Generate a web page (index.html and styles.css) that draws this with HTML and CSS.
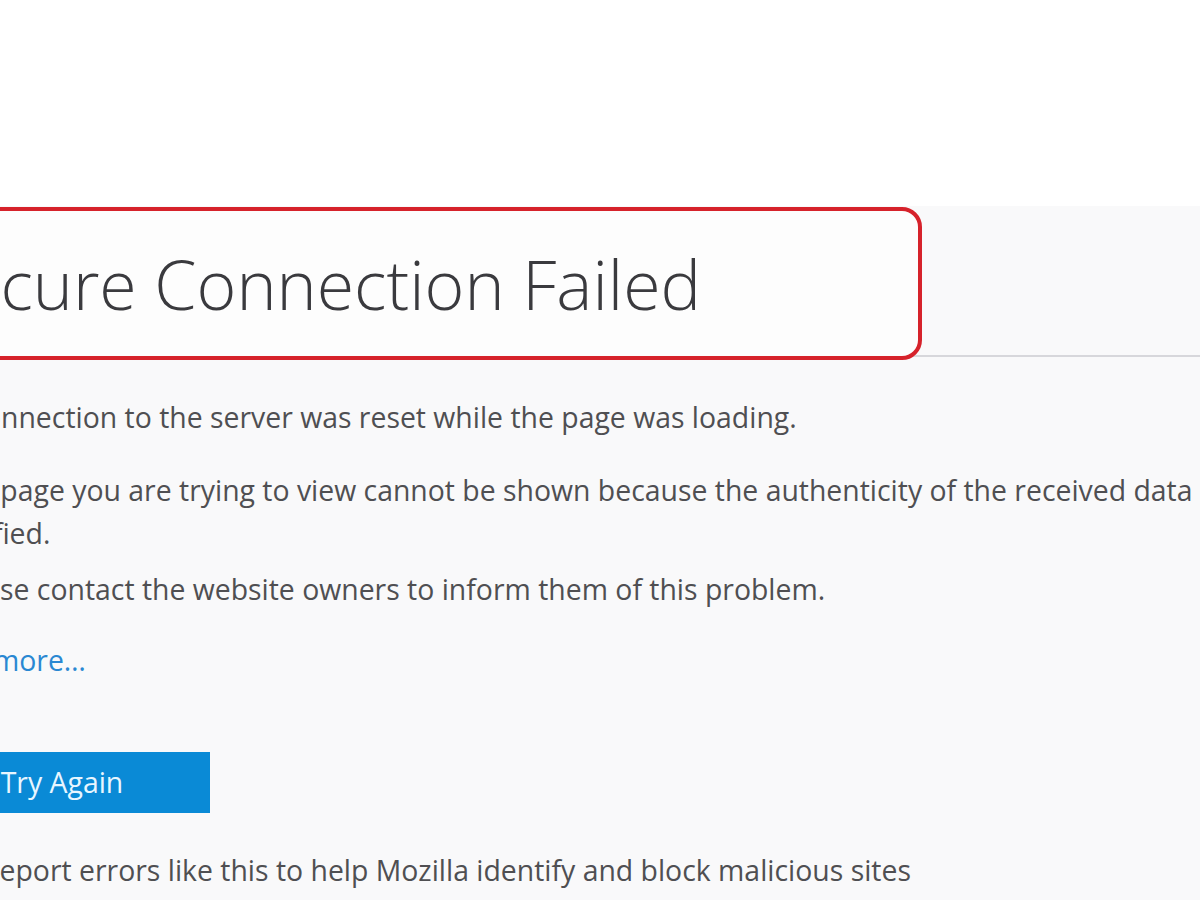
FILE: index.html
```html
<!DOCTYPE html>
<html lang="en">
<head>
	<meta charset="UTF-8">
	<title>Secure Connection Failed</title>
	<link rel="stylesheet" href="styles.css">
</head>
<body>
	<div class="top"></div>
	<div class="page">
		<div class="container">
			<div class="title">
				<h1>Secure Connection Failed</h1>
				<div class="mark"></div>
			</div>
			<p class="short">The connection to the server was reset while the page was loading.</p>
			<ul class="long">
				<li>The page you are trying to view cannot be shown because the authenticity of the received data could not be verified.</li>
				<li>Please contact the website owners to inform them of this problem.</li>
			</ul>
			<a href="javascript:;" class="learn">Learn more…</a>
			<div class="buttons">
				<a href="javascript:;" class="btn">Try Again</a>
			</div>
			<label class="report"><input type="checkbox"> Report errors like this to help Mozilla identify and block malicious sites</label>
		</div>
	</div>
</body>
</html>
```

FILE: styles.css
```css
html, body {
	margin: 0;
	overflow: hidden;
}
body {
	background-color: #fff;
	font-family: "Open Sans", "Noto Sans", sans-serif;
	color: #4f4f52;
}
.top {
	height: 206px;
}
.page {
	background-color: #f9f9fa;
	height: 694px;
}
.container {
	width: 1520px;
	margin-left: -86px;
	font-size: 28.4px;
	line-height: 43px;
}
.title {
	position: relative;
	padding-top: 38px;
	padding-bottom: 31px;
	border-bottom: 2px solid #d7d7db;
}
h1 {
	position: relative;
	z-index: 1;
	margin: 0 0 0 12px;
	font-size: 68px;
	font-weight: 300;
	line-height: 80px;
	color: #3a3a3e;
}
.mark {
	position: absolute;
	top: 1px;
	bottom: -5px;
	left: -30px;
	width: 1038px;
	border: 4px solid #d6222b;
	border-radius: 20px;
	background-color: #fdfdfd;
	box-sizing: border-box;
}
.short {
	margin: 39px 0 0;
}
.long {
	margin: 30px 0 0;
	padding-left: 30px;
	list-style: none;
}
.long li + li {
	margin-top: 13px;
}
.learn {
	display: block;
	margin: 28px 0 0 -4px;
	color: #2a88d2;
	text-decoration: none;
}
.buttons {
	margin-top: 70px;
}
.btn {
	display: block;
	width: 296px;
	height: 61px;
	line-height: 61px;
	text-align: center;
	background-color: #0a8ad6;
	color: #e8f6ff;
	text-decoration: none;
}
.report {
	display: flex;
	align-items: center;
	gap: 10px;
	margin-top: 36px;
	padding-left: 38px;
}
.report input {
	width: 20px;
	height: 20px;
	margin: 0;
}
```
